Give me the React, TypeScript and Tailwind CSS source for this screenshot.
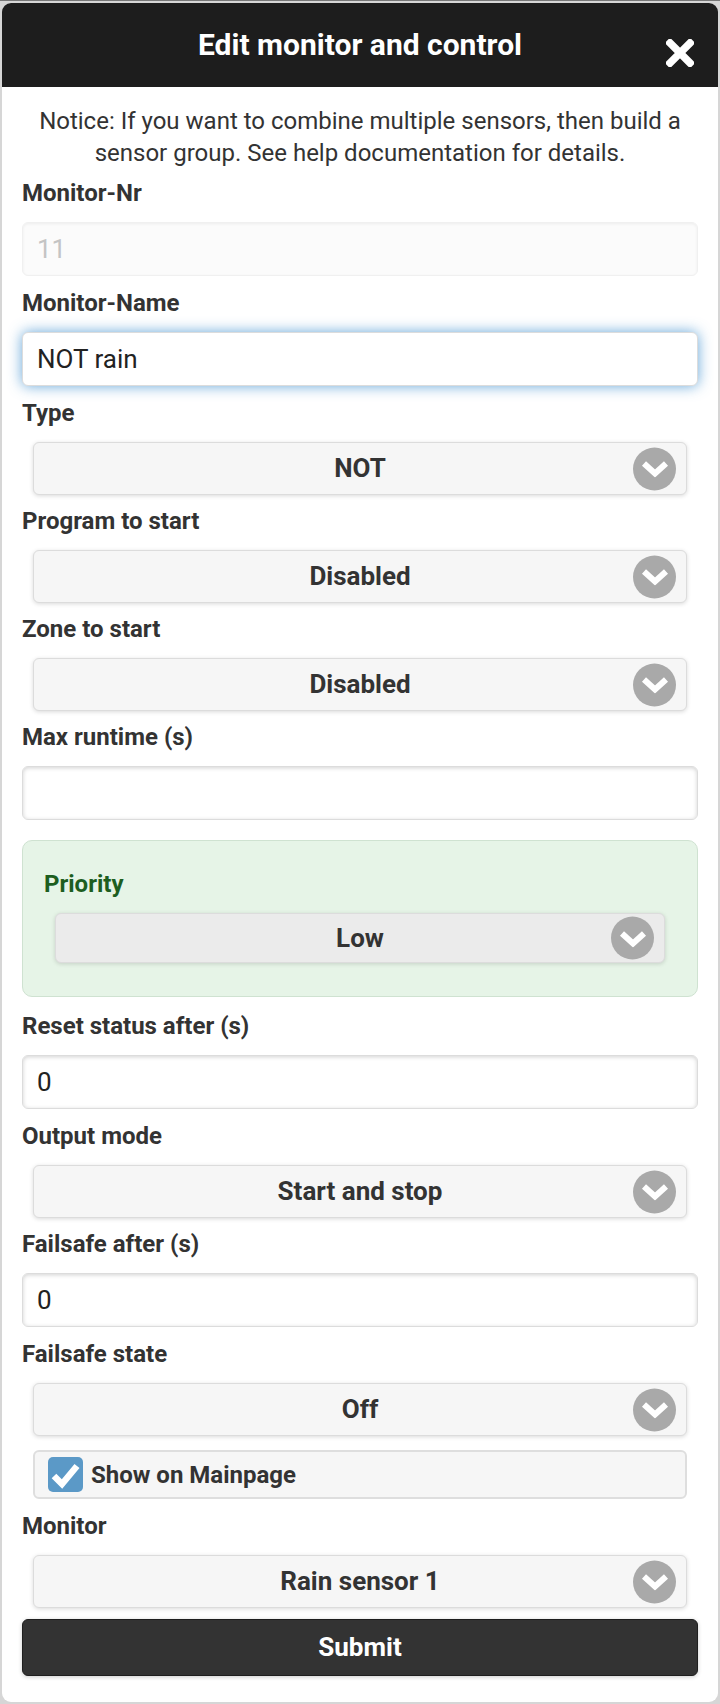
import React from 'react';

const font = { fontFamily: 'Roboto, "Liberation Sans", sans-serif' };

const Chevron: React.FC = () => (
  <span className="absolute right-[10px] top-1/2 -translate-y-1/2 w-[43px] h-[43px] rounded-full bg-[#a9a9a9] flex items-center justify-center">
    <svg width="28" height="18" viewBox="0 0 28 18">
      <polyline points="3,4 14,14 25,4" fill="none" stroke="white" strokeWidth="6" strokeLinecap="butt" strokeLinejoin="miter" />
    </svg>
  </span>
);

const Label: React.FC<{ text: string; green?: boolean }> = ({ text, green }) => (
  <div className={`h-[30px] leading-[30px] text-[24px] font-bold ${green ? 'text-[#1d5e1f]' : 'text-[#333]'}`}>{text}</div>
);

const Select: React.FC<{ value: string; dark?: boolean; className?: string }> = ({ value, dark, className }) => (
  <div
    className={`relative rounded-[6px] border border-[#dcdcdc] shadow-[0_1px_4px_rgba(0,0,0,0.15)] flex items-center justify-center text-[26px] font-bold text-[#333] ${dark ? 'bg-[#ebebeb]' : 'bg-[#f6f6f6]'} ${className ?? ''}`}
  >
    {value}
    <Chevron />
  </div>
);

const Input: React.FC<{ value: string; disabled?: boolean; focused?: boolean }> = ({ value, disabled, focused }) => (
  <div
    className={`mt-[14px] mb-[12px] h-[54px] rounded-[6px] flex items-center px-[14px] text-[26px] ${
      disabled
        ? 'bg-[#fbfbfb] border border-[#f0f0f0] text-[#c4c4c4] shadow-[inset_0_1px_3px_rgba(0,0,0,0.06)]'
        : focused
        ? 'bg-white border border-[#dcdcdc] text-[#222] shadow-[0_0_14px_rgba(51,136,204,0.75)]'
        : 'bg-white border border-[#dcdcdc] text-[#222] shadow-[inset_0_1px_4px_rgba(0,0,0,0.18)]'
    }`}
  >
    {value}
  </div>
);

const SelectField: React.FC<{ label: string; value: string }> = ({ label, value }) => (
  <div>
    <Label text={label} />
    <Select value={value} className="mx-[11px] mt-[14px] mb-[11px] h-[53px]" />
  </div>
);

const InputField: React.FC<{ label: string; value: string; disabled?: boolean; focused?: boolean }> = ({ label, ...rest }) => (
  <div>
    <Label text={label} />
    <Input {...rest} />
  </div>
);

export default function App() {
  return (
    <div className="w-[720px] h-[1704px] bg-[#d6d6d6] p-[2px] border-t-[1px] border-[#777]" style={font}>
      <div className="h-full rounded-[9px] bg-white overflow-hidden flex flex-col">
        <div className="relative h-[84px] bg-[#1d1d1d] flex items-center justify-center">
          <span className="text-white text-[30px] font-bold -mt-[2px]">Edit monitor and control</span>
          <svg className="absolute right-[24px] top-[36px]" width="28" height="28" viewBox="0 0 28 28">
            <path d="M4 4 L24 24 M24 4 L4 24" stroke="white" strokeWidth="7.5" strokeLinecap="square" />
          </svg>
        </div>

        <div className="px-[20px] pt-[18px]">
          <p className="text-center text-[24px] leading-[32px] text-[#333]">
            Notice: If you want to combine multiple sensors, then build a sensor group. See help documentation for details.
          </p>

          <div className="mt-[9px]">
            <InputField label="Monitor-Nr" value="11" disabled />
            <InputField label="Monitor-Name" value="NOT rain" focused />
            <SelectField label="Type" value="NOT" />
            <SelectField label="Program to start" value="Disabled" />
            <SelectField label="Zone to start" value="Disabled" />
            <InputField label="Max runtime (s)" value="" />

            <div className="mt-[20px] mb-[14px] rounded-[10px] border border-[#cfe2d1] bg-[#e6f4e7] pl-[21px] pr-[21px] pt-[28px] pb-[33px]">
              <Label text="Priority" green />
              <Select value="Low" dark className="mx-[11px] mt-[14px] h-[50px]" />
            </div>

            <InputField label="Reset status after (s)" value="0" />
            <SelectField label="Output mode" value="Start and stop" />
            <InputField label="Failsafe after (s)" value="0" />
            <SelectField label="Failsafe state" value="Off" />

            <div className="mx-[11px] mt-[14px] mb-[12px] h-[49px] rounded-[6px] border-2 border-[#dedede] bg-[#f6f6f6] flex items-center pl-[13px] gap-[8px]">
              <span className="w-[35px] h-[35px] rounded-[5px] bg-[#5b99c7] flex items-center justify-center">
                <svg width="35" height="35" viewBox="0 0 35 35">
                  <polyline points="6,19 14,27 29,9" fill="none" stroke="white" strokeWidth="6.5" />
                </svg>
              </span>
              <span className="text-[24px] font-bold text-[#333]">Show on Mainpage</span>
            </div>

            <SelectField label="Monitor" value="Rain sensor 1" />

            <button className="w-full h-[57px] rounded-[6px] bg-[#333] border border-[#1f1f1f] text-white text-[26px] font-bold shadow-[0_1px_4px_rgba(0,0,0,0.2)]">
              Submit
            </button>
          </div>
        </div>
      </div>
    </div>
  );
}
